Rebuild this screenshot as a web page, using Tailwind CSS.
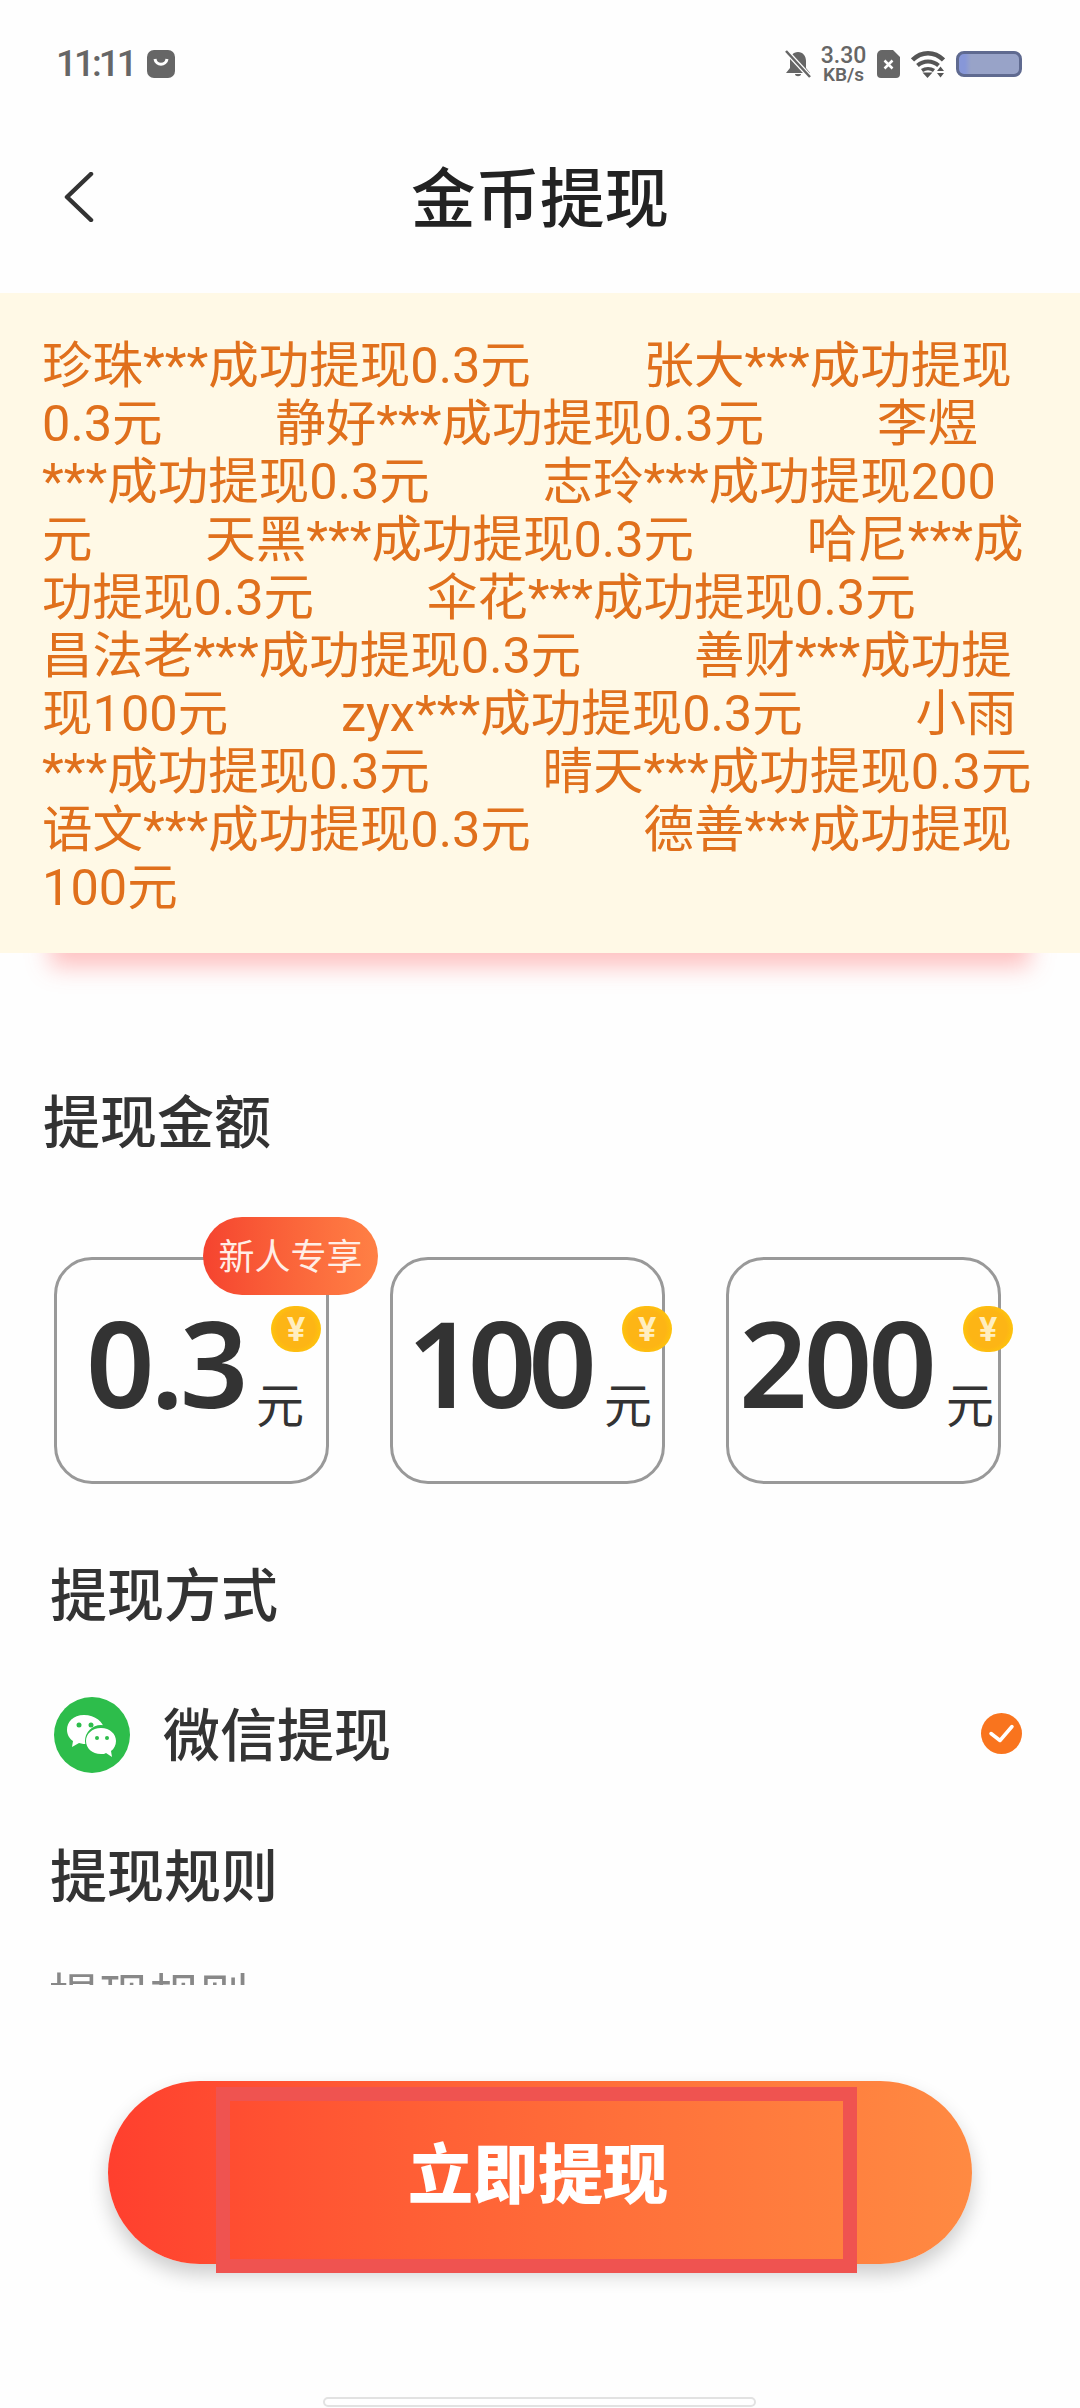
<!DOCTYPE html>
<html lang="zh-CN">
<head>
    <meta charset="UTF-8">
    <meta name="viewport" content="width=device-width, initial-scale=1.0">
    <title>金币提现</title>
    <script src="https://cdn.jsdelivr.net/npm/@tailwindcss/browser@4"></script>
</head>
<body class="bg-white">
    <div class="relative w-[1080px] h-[2408px] overflow-hidden flex flex-col bg-[#fefefe] font-[Roboto,'Noto_Sans_CJK_SC',sans-serif]">

        <!-- status bar -->
        <div class="h-[100px] shrink-0 flex items-start justify-between pt-[50px] pl-[56px] pr-[58px] text-[#666]">
            <div class="flex items-center gap-[12px] h-[28px]">
                <span class="text-[37px] leading-[28px] font-medium tracking-[-3px]">11:11</span>
                <svg class="w-[28px] h-[28px]" viewBox="0 0 28 28">
                    <rect width="28" height="28" rx="7" fill="#666"/>
                    <path d="M8 9c1 7 11 7 12 0" stroke="#fff" stroke-width="3" fill="none"/>
                </svg>
            </div>
            <div class="flex items-center h-[28px]">
                <svg class="w-[26px] h-[28px]" viewBox="0 0 26 28">
                    <path d="M13 2c5 0 8 4 8 9v7l4 5H1l4-5v-7c0-5 3-9 8-9z" fill="#666"/>
                    <path d="M10 24c0 3 6 3 6 0z" fill="#666"/>
                    <path d="M1 1l24 26" stroke="#fff" stroke-width="5"/>
                    <path d="M1 1l24 26" stroke="#666" stroke-width="2.5"/>
                </svg>
                <div class="ml-[11px] w-[43px] flex flex-col items-center font-medium">
                    <span class="text-[23px] leading-[20px]">3.30</span>
                    <span class="text-[19px] leading-[17px] font-semibold">KB/s</span>
                </div>
                <svg class="ml-[12px] w-[23px] h-[28px]" viewBox="0 0 23 28">
                    <path d="M5 0h11l7 7v17a4 4 0 0 1-4 4H4a4 4 0 0 1-4-4V5a5 5 0 0 1 5-5z" fill="#666"/>
                    <path d="M7.5 10.500l8 8M15.500 10.500l-8 8" stroke="#fff" stroke-width="2.500"/>
                </svg>
                <svg class="ml-[11px] w-[34px] h-[28px]" viewBox="0 0 34 28">
                    <path d="M1.500 10c9-9 22-9 31 0" stroke="#555" stroke-width="4.500" fill="none"/>
                    <path d="M6.500 15.500c6-5.500 15-5.500 21 0" stroke="#555" stroke-width="4" fill="none"/>
                    <path d="M11 20.500c3.500-2.500 8.500-2.500 12 0" stroke="#555" stroke-width="3.500" fill="none"/>
                    <path d="M11.500 22.500h10l-5 5.500zM26 21l3.500-4.500 3.500 4.500zM26 23h7l-3.500 4.500z" fill="#555"/>
                </svg>
                <div class="ml-[11px] w-[66px] h-[26px] rounded-[8px] border-[3px] border-[#5f6a90] bg-[linear-gradient(90deg,#8797d8_0,#8797d8_10%,#98a3c8_20%,#98a3c8_100%)]"></div>
            </div>
        </div>

        <!-- title -->
        <div class="h-[193px] shrink-0 grid grid-cols-[1fr_auto_1fr] items-center pt-[6px] px-[64px]">
            <svg class="w-[30px] h-[50px] -mt-[6px]" viewBox="0 0 30 50">
                <path d="M27 2L3 25l24 23" stroke="#333" stroke-width="4.500" fill="none" stroke-linecap="round" stroke-linejoin="round"/>
            </svg>
            <h1 class="text-[64.5px] leading-[72px] font-medium text-[#222]">金币提现</h1>
            <div></div>
        </div>

        <!-- broadcast -->
        <div class="h-[660px] shrink-0 pt-[44px] pl-[42px] pr-[42px] bg-[#fff9e6] text-[50.5px] leading-[58px] text-[#e0701c] whitespace-pre-wrap shadow-[0_64px_22px_-50px_rgba(255,90,90,0.36)]">珍珠***成功提现0.3元         张大***成功提现0.3元         静好***成功提现0.3元         李煜***成功提现0.3元         志玲***成功提现200元         天黑***成功提现0.3元         哈尼***成功提现0.3元         伞花***成功提现0.3元         昌法老***成功提现0.3元         善财***成功提现100元         zyx***成功提现0.3元         小雨***成功提现0.3元         晴天***成功提现0.3元         语文***成功提现0.3元         德善***成功提现100元</div>

        <!-- amount -->
        <h2 class="mt-[139px] pl-[43px] text-[57px] leading-[64px] font-medium text-[#333]">提现金额</h2>
        <div class="mt-[101px] pl-[54px] flex gap-[61px] text-[#333]">
            <div class="relative w-[275px] h-[227px] rounded-[38px] border-[3px] border-[#999]">
                <span class="absolute left-[29px] top-[22px] font-['Noto_Sans'] text-[120px] leading-[160px] font-semibold tracking-[-4px]">0.3</span>
                <span class="absolute right-[22px] top-[120px] text-[48px] leading-[54px]">元</span>
                <div class="absolute left-[214px] top-[46px] w-[50px] h-[46px] rounded-full bg-[radial-gradient(circle,#fdb515_55%,#ffd800_100%)] flex items-center justify-center text-[34px] leading-[30px] font-bold text-[#ffeec0]">¥</div>
                <div class="absolute left-[146px] -top-[43px] w-[175px] h-[78px] rounded-full bg-gradient-to-r from-[#f5432f] to-[#ff8045] flex items-center justify-center pt-[3px] text-[36px] text-[#ffeee6]">新人专享</div>
            </div>
            <div class="relative w-[275px] h-[227px] rounded-[38px] border-[3px] border-[#999]">
                <span class="absolute left-[14px] top-[22px] font-['Noto_Sans'] text-[120px] leading-[160px] font-semibold tracking-[-8px]">100</span>
                <span class="absolute right-[10px] top-[120px] text-[48px] leading-[54px]">元</span>
                <div class="absolute left-[229px] top-[46px] w-[50px] h-[46px] rounded-full bg-[radial-gradient(circle,#fdb515_55%,#ffd800_100%)] flex items-center justify-center text-[34px] leading-[30px] font-bold text-[#ffeec0]">¥</div>
            </div>
            <div class="relative w-[275px] h-[227px] rounded-[38px] border-[3px] border-[#999]">
                <span class="absolute left-[10px] top-[22px] font-['Noto_Sans'] text-[120px] leading-[160px] font-semibold tracking-[-4px]">200</span>
                <span class="absolute right-[4px] top-[120px] text-[48px] leading-[54px]">元</span>
                <div class="absolute left-[234px] top-[46px] w-[50px] h-[46px] rounded-full bg-[radial-gradient(circle,#fdb515_55%,#ffd800_100%)] flex items-center justify-center text-[34px] leading-[30px] font-bold text-[#ffeec0]">¥</div>
            </div>
        </div>

        <!-- method -->
        <h2 class="mt-[81px] pl-[50px] text-[57px] leading-[64px] font-medium text-[#333]">提现方式</h2>
        <div class="mt-[68px] pl-[54px] pr-[57px] h-[76px] flex items-center text-[#333]">
            <svg class="w-[76px] h-[76px]" viewBox="0 0 76 76">
                <circle cx="38" cy="38" r="38" fill="#2dbd4b"/>
                <path d="M30 18c-11 0-17 7-17 15 0 5 3 9 6 11l-1 6 7-4c3 1 6 1 9 1 9 0 16-6 16-14 0-8-9-15-20-15z" fill="#fff"/>
                <circle cx="47" cy="44" r="16" fill="#2dbd4b"/>
                <path d="M47 31c-9 0-15 6-15 13s6 13 15 13c2 0 4 0 5-1l6 4-1-6c3-2 5-6 5-10 0-7-6-13-15-13z" fill="#fff"/>
                <circle cx="25" cy="28" r="2.500" fill="#2dbd4b"/>
                <circle cx="37" cy="28" r="2.500" fill="#2dbd4b"/>
                <circle cx="43" cy="41" r="2" fill="#2dbd4b"/>
                <circle cx="53" cy="41" r="2" fill="#2dbd4b"/>
            </svg>
            <span class="ml-[33px] pt-[3px] text-[57px] leading-[64px] font-medium">微信提现</span>
            <svg class="ml-auto w-[41px] h-[41px] -mt-[4px] mr-[1px]" viewBox="0 0 41 41">
                <circle cx="20.500" cy="20.500" r="20.500" fill="#f9741e"/>
                <path d="M10 20.500l9 7 12-14" stroke="#fff" stroke-width="3.500" fill="none" stroke-linecap="round" stroke-linejoin="round"/>
            </svg>
        </div>

        <!-- rules -->
        <h2 class="mt-[73px] pl-[50px] text-[57px] leading-[64px] font-medium text-[#333]">提现规则</h2>
        <div class="h-[75px] overflow-hidden pl-[49px] pt-[60px] text-[50px] leading-[56px] text-[#888]">提现规则</div>

        <!-- submit -->
        <div class="relative mt-[96px] ml-[108px] w-[864px] h-[183px] rounded-full bg-gradient-to-r from-[#ff3f2e] to-[#ff8a42] shadow-[0_10px_20px_rgba(0,0,0,0.2)]">
            <div class="absolute left-[108px] top-[6px] w-[641px] h-[186px] border-[14px] border-[#ef5350] flex items-center justify-center pb-[6px] pl-[3px] text-[65px] font-black text-white">立即提现</div>
        </div>

        <!-- home bar -->
        <div class="absolute left-[323px] top-[2397px] w-[433px] h-[10px] rounded-full bg-white border-2 border-[#e2e2e2]"></div>
    </div>
</body>
</html>
